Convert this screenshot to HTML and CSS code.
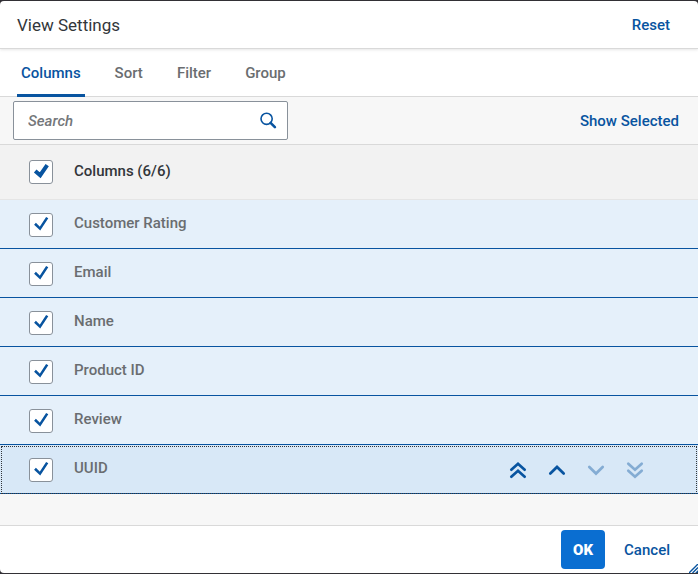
FILE: index.html
```html
<!DOCTYPE html>
<html lang="en">
<head>
<meta charset="utf-8">
<title>View Settings</title>
<link rel="stylesheet" href="styles.css">
</head>
<body>
<section class="dialog" role="dialog" aria-labelledby="title">
  <header class="bar header">
    <h1 id="title">View Settings</h1>
    <button class="link" type="button">Reset</button>
  </header>
  <nav class="tabs" role="tablist">
    <button class="tab active" type="button" role="tab" aria-selected="true">Columns</button>
    <button class="tab" type="button" role="tab">Sort</button>
    <button class="tab" type="button" role="tab">Filter</button>
    <button class="tab" type="button" role="tab">Group</button>
  </nav>
  <div class="bar toolbar">
    <div class="search">
      <input type="text" placeholder="Search" aria-label="Search">
      <button class="icon" type="button" aria-label="Search">
        <svg width="18" height="18" viewBox="0 0 18 18" fill="none" stroke="currentColor"><circle cx="7.6" cy="6.8" r="5.6" stroke-width="1.6"/><path d="M11.6 10.8l4.3 4.3" stroke-width="2.6" stroke-linecap="round"/></svg>
      </button>
    </div>
    <button class="link" type="button">Show Selected</button>
  </div>
  <main class="content">
    <ul class="list">
      <li class="row all"><input type="checkbox" id="all" checked><label for="all">Columns (6/6)</label></li>
      <li class="row"><input type="checkbox" id="rating" checked><label for="rating">Customer Rating</label></li>
      <li class="row"><input type="checkbox" id="email" checked><label for="email">Email</label></li>
      <li class="row"><input type="checkbox" id="name" checked><label for="name">Name</label></li>
      <li class="row"><input type="checkbox" id="product" checked><label for="product">Product ID</label></li>
      <li class="row"><input type="checkbox" id="review" checked><label for="review">Review</label></li>
      <li class="row focused"><input type="checkbox" id="uuid" checked><label for="uuid">UUID</label>
        <div class="moves">
          <button class="icon" type="button" aria-label="Move to top"><svg width="18" height="18" viewBox="0 0 18 18"><path d="M2.3 8.7l6.7-6 6.7 6M2.3 15.7l6.7-6 6.7 6"/></svg></button>
          <button class="icon" type="button" aria-label="Move up"><svg width="18" height="18" viewBox="0 0 18 18"><path d="M2.3 12.5l6.7-6.5 6.7 6.5"/></svg></button>
          <button class="icon" type="button" aria-label="Move down" disabled><svg width="18" height="18" viewBox="0 0 18 18"><path d="M2.3 6l6.7 6.5 6.7-6.5"/></svg></button>
          <button class="icon" type="button" aria-label="Move to bottom" disabled><svg width="18" height="18" viewBox="0 0 18 18"><path d="M2.3 2.7l6.7 6 6.7-6M2.3 9.7l6.7 6 6.7-6"/></svg></button>
        </div>
      </li>
    </ul>
  </main>
  <footer class="bar footer">
    <button class="ok" type="button">OK</button>
    <button class="link" type="button">Cancel</button>
    <svg class="grip" width="9" height="9" viewBox="0 0 9 9" aria-hidden="true"><path d="M0 9L9 0M3.5 9L9 3.5M7 9L9 7"/></svg>
  </footer>
</section>
</body>
</html>
```
FILE: styles.css
```css
* { box-sizing: border-box; }

body {
  margin: 0;
  background: #333136;
  color: #32363a;
  font: 500 15px/20px Roboto, "Liberation Sans", sans-serif;
}

button, input { font: inherit; }

button {
  padding: 0;
  border: 0;
  background: none;
  color: #0854a0;
}

.dialog {
  display: flex;
  flex-direction: column;
  min-height: 100vh;
  border-top: 1px solid #333136;
  border-bottom: 1px solid #333136;
}

.bar {
  display: flex;
  align-items: center;
  justify-content: space-between;
  height: 48px;
  background: #fff;
  border-bottom: 1px solid #d9d9d9;
}

.header {
  position: relative;
  padding: 0 28px 0 17px;
  border-radius: 4px 4px 0 0;
  box-shadow: 0 1px 3px #0000001a;
}

h1 {
  margin: 0;
  font-size: 17px;
  font-weight: 400;
}

.tabs {
  display: flex;
  gap: 26px;
  height: 48px;
  padding: 0 17px;
  background: #fff;
  border-bottom: 1px solid #d9d9d9;
}

.tab {
  margin-bottom: -1px;
  padding: 3px 4px 0;
  border-bottom: 3px solid transparent;
  color: #6a6d70;
}

.tab.active {
  border-color: #0854a0;
  border-radius: 2px 2px 0 0;
  color: #0854a0;
}

.toolbar {
  padding: 0 19px 0 13px;
  background: #f7f7f7;
}

.search {
  display: flex;
  align-items: center;
  width: 275px;
  height: 39px;
  padding: 0 10px 0 14px;
  background: #fff;
  border: 1px solid #89919a;
  border-radius: 2px;
}

.search input {
  flex: 1;
  min-width: 0;
  padding: 0;
  border: 0;
  outline: 0;
}

.search input::placeholder {
  color: #74777a;
  font-style: italic;
}

.icon, .icon svg { display: block; }

.content {
  flex: 1;
  background: #f7f7f7;
}

.list {
  margin: 0;
  padding: 0;
  list-style: none;
}

.row {
  display: flex;
  align-items: center;
  gap: 21px;
  height: 49px;
  padding: 2px 54px 0 29px;
  background: #e5f0fa;
  border-bottom: 1px solid #0854a0;
  color: #6a6d70;
}

.row.all {
  height: 55px;
  padding-top: 0;
  background: #f2f2f2;
  border-color: #e5e5e5;
  color: #32363a;
}

.row label { padding-bottom: 4px; }

.row.all label { padding-bottom: 2px; }

.row input {
  appearance: none;
  width: 24px;
  height: 24px;
  margin: 0;
  background: #fff url("data:image/svg+xml,%3Csvg xmlns='http://www.w3.org/2000/svg' viewBox='0 0 22 22'%3E%3Cpath d='M5 9.8l5 4.8 7.2-11' fill='none' stroke='%230854a0' stroke-width='2.6'/%3E%3C/svg%3E");
  border: 1px solid #89919a;
  border-radius: 3px;
}

.row.all input {
  background-image: url("data:image/svg+xml,%3Csvg xmlns='http://www.w3.org/2000/svg' viewBox='0 0 22 22'%3E%3Cpath d='M5.2 10l5 4.2 7-10' fill='none' stroke='%230854a0' stroke-width='4'/%3E%3C/svg%3E");
}

.row.focused {
  position: relative;
  background: #d8e8f7;
}

.row.focused::after {
  position: absolute;
  inset: 1px 1px -1px;
  border: 1px dotted #32363a;
  content: "";
  pointer-events: none;
}

.moves {
  display: flex;
  gap: 21px;
  margin-left: auto;
}

.moves path {
  fill: none;
  stroke: currentColor;
  stroke-width: 2.7;
  stroke-linecap: round;
}

.icon:disabled {
  color: #0854a0;
  opacity: 0.4;
}

.footer {
  position: relative;
  justify-content: flex-end;
  gap: 19px;
  padding: 0 28px;
  border-top: 1px solid #d9d9d9;
  border-bottom: 0;
  border-radius: 0 0 4px 4px;
}

.ok {
  width: 44px;
  height: 39px;
  border-radius: 4px;
  background: #0a6ed1;
  color: #fff;
  font-weight: 900;
}

.grip {
  position: absolute;
  right: 0;
  bottom: 0;
}

.grip path {
  stroke: #0854a0;
  stroke-width: 1.4;
}
```
